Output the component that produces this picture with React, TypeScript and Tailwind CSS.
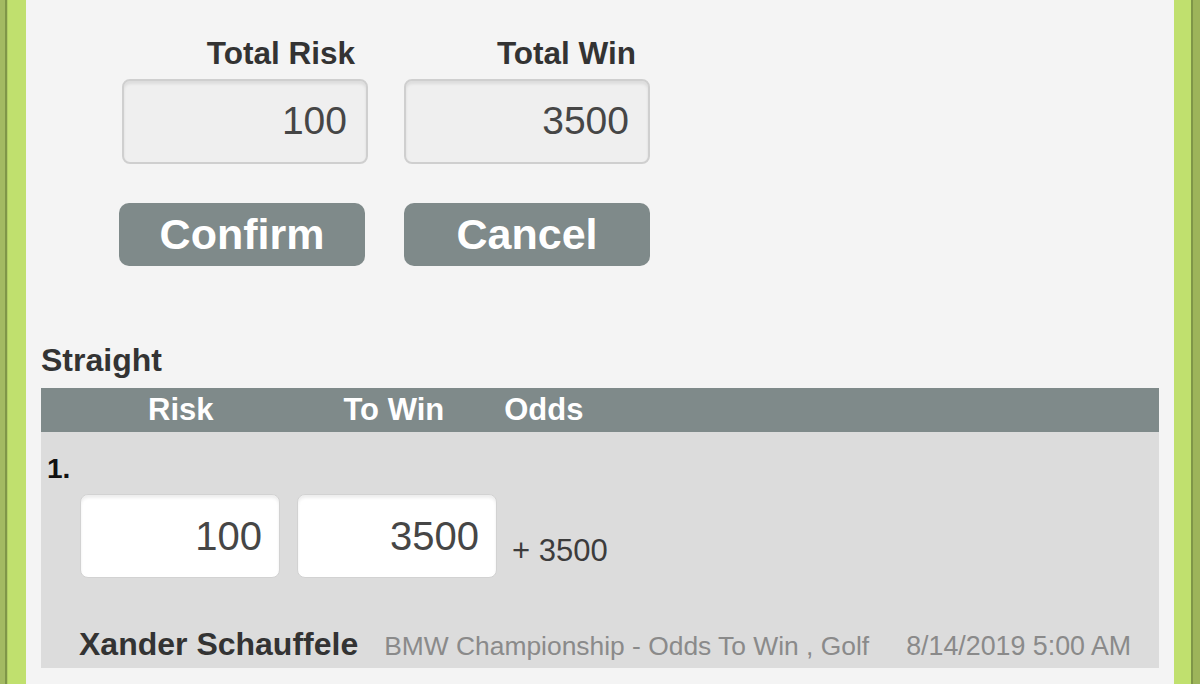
import React from "react";

const font = { fontFamily: '"Liberation Sans", Arial, Helvetica, sans-serif' };

function TopBox({ value }: { value: string }) {
  return (
    <div className="flex h-[85px] w-[246px] items-center justify-end rounded-[8px] border-2 border-[#cfcfcf] bg-[#efefef] pr-[19px] text-[39px] text-[#464646] shadow-[inset_0_3px_3px_rgba(0,0,0,0.08)]">
      {value}
    </div>
  );
}

function RowBox({ value }: { value: string }) {
  return (
    <div className="flex h-[84px] w-[200px] items-center justify-end rounded-[8px] border border-[#d2d2d2] bg-white pr-[17px] text-[40px] text-[#464646] shadow-[inset_0_3px_3px_rgba(0,0,0,0.07)]">
      {value}
    </div>
  );
}

export default function App() {
  return (
    <div className="flex h-[684px] w-[1200px] overflow-hidden" style={font}>
      {/* left frame */}
      <div className="flex h-full w-[26px] shrink-0">
        <div className="w-[5px] bg-[#a3ba62]" />
        <div className="w-[2px] bg-[#7f9648]" />
        <div className="w-[1px] bg-[#b0cc65]" />
        <div className="flex-1 bg-[#c0e06e]" />
      </div>

      {/* main */}
      <div className="flex h-full flex-1 flex-col bg-[#f4f4f4] px-[15px]">
        {/* totals */}
        <div className="grid grid-cols-[246px_246px] gap-x-[36px] pl-[81px] pt-[35px]">
          <div className="h-[36px] pr-[13px] text-right text-[31.5px] font-bold leading-[36px] text-[#333]">Total Risk</div>
          <div className="h-[36px] pr-[14px] text-right text-[31.5px] font-bold leading-[36px] text-[#333]">Total Win</div>
          <div className="mt-[8px]"><TopBox value="100" /></div>
          <div className="mt-[8px]"><TopBox value="3500" /></div>
          <div className="mt-[39px] ml-[-3px]">
            <div className="flex h-[63px] w-[246px] items-center justify-center rounded-[10px] bg-[#7f8a8a] text-[43px] font-bold text-white">Confirm</div>
          </div>
          <div className="mt-[39px]">
            <div className="flex h-[63px] w-[246px] items-center justify-center rounded-[10px] bg-[#7f8a8a] text-[43px] font-bold text-white">Cancel</div>
          </div>
        </div>

        {/* Straight */}
        <div className="mt-[76px] h-[36px] text-[32px] font-bold leading-[36px] text-[#333]">Straight</div>

        <div className="mt-[10px] flex h-[44px] items-center bg-[#7f8a8a] text-[31px] font-bold text-white">
          <span className="ml-[107px]">Risk</span>
          <span className="ml-[130px]">To Win</span>
          <span className="ml-[60px]">Odds</span>
        </div>

        <div className="flex flex-col bg-[#dcdcdc] pb-[6px]">
          <div className="ml-[6px] mt-[22px] h-[30px] text-[28px] font-bold leading-[30px] text-[#111]">1.</div>
          <div className="mt-[10px] flex items-end pl-[39px]">
            <RowBox value="100" />
            <div className="ml-[17px]">
              <RowBox value="3500" />
            </div>
            <div className="mb-[9px] ml-[15px] h-[36px] text-[31px] leading-[36px] text-[#3c3c3c]">+ 3500</div>
          </div>
          <div className="mt-[48px] flex h-[36px] items-baseline pl-[38px] leading-[36px]">
            <span className="text-[32px] font-bold text-[#333]">Xander Schauffele</span>
            <span className="ml-[26px] text-[26.4px] text-[#8a8a8a]">BMW Championship - Odds To Win , Golf</span>
            <span className="ml-[37px] text-[26.8px] text-[#8a8a8a]">8/14/2019 5:00 AM</span>
          </div>
        </div>
      </div>

      {/* right frame */}
      <div className="flex h-full w-[26px] shrink-0">
        <div className="w-[17px] bg-[#c0e06e]" />
        <div className="w-[2px] bg-[#7f9648]" />
        <div className="flex-1 bg-[#9db45a]" />
      </div>
    </div>
  );
}
